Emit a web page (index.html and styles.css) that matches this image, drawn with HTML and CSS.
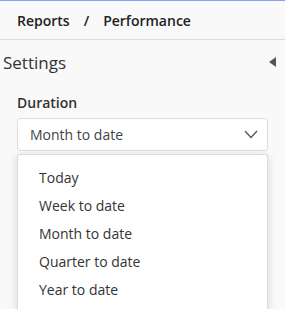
FILE: index.html
```html
<!DOCTYPE html>
<html>
<head>
<meta charset="utf-8">
<link rel="stylesheet" href="styles.css">
</head>
<body>
<div class="topbar">
  <span class="crumb">Reports</span><span class="sep">/</span><span class="crumb">Performance</span>
</div>
<div class="panel-head">
  <span class="panel-title">Settings</span>
  <span class="collapse"></span>
</div>
<div class="field">
  <div class="label">Duration</div>
  <div class="select">
    <span>Month to date</span>
    <svg class="chev" width="14" height="9" viewBox="0 0 14 9"><path d="M1 1 L7 7.5 L13 1" fill="none" stroke="#555" stroke-width="1.3"/></svg>
  </div>
  <ul class="menu">
    <li>Today</li>
    <li>Week to date</li>
    <li>Month to date</li>
    <li>Quarter to date</li>
    <li>Year to date</li>
  </ul>
</div>
</body>
</html>
```
FILE: styles.css
```css
html, body { margin: 0; padding: 0; }
body {
  background: #f9f9f9;
  font-family: "Open Sans", sans-serif;
  color: #333;
  width: 285px;
  height: 309px;
  overflow: hidden;
  border-top: 1px solid #8a9ef0;
  box-sizing: border-box;
}
.topbar {
  height: 39px;
  box-sizing: border-box;
  border-bottom: 1px solid #dcdcdc;
  display: flex;
  align-items: center;
  padding-left: 17px;
  font-size: 14px;
  font-weight: 600;
  color: #222;
}
.sep { margin: 0 14px; }
.panel-head {
  display: flex;
  align-items: center;
  justify-content: space-between;
  padding: 11px 9px 0 3px;
  height: 22px;
}
.panel-title { font-size: 17px; color: #333; }
.collapse {
  width: 0; height: 0;
  border-top: 5px solid transparent;
  border-bottom: 5px solid transparent;
  border-right: 7px solid #555;
}
.field { padding: 0 17px; margin-top: 20px; }
.label { font-size: 14px; font-weight: 600; color: #333; line-height: 20px; }
.select {
  margin-top: 5px;
  height: 33px;
  box-sizing: border-box;
  background: #fff;
  border: 1px solid #dcdcdc;
  border-radius: 3px;
  display: flex;
  align-items: center;
  justify-content: space-between;
  padding: 0 9px 0 12px;
  font-size: 14px;
  color: #444;
}
.menu {
  list-style: none;
  margin: 3px 0 0;
  padding: 9px 0 0 21px;
  background: #fff;
  border: 1px solid #dcdcdc;
  border-bottom: none;
  border-radius: 3px 3px 0 0;
  box-shadow: 0 2px 8px rgba(0,0,0,0.15);
  font-size: 14px;
  color: #333;
  height: 147px;
}
.menu li { line-height: 28px; }
```
